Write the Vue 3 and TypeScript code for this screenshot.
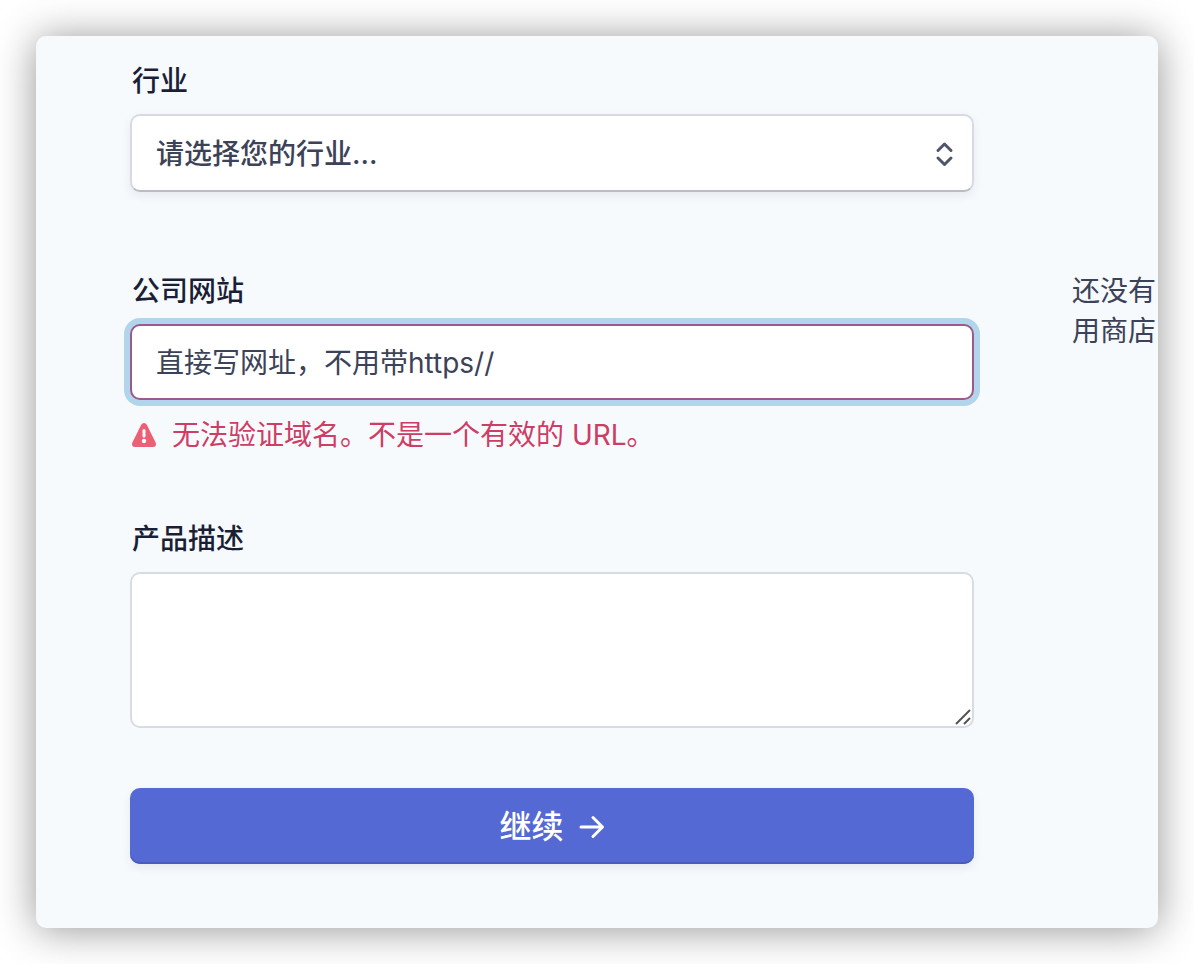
<script setup lang="ts">
import { ref } from 'vue'

const industry = ref('')
const website = ref('直接写网址，不用带https//')
const description = ref('')
const industries: string[] = ['软件', '零售', '教育', '专业服务']
</script>

<template>
  <main class="page">
    <section class="panel">
      <form class="form" @submit.prevent>
        <div class="field industry">
          <label for="industry">行业</label>
          <div class="select-wrap">
            <select id="industry" v-model="industry" class="control">
              <option value="">请选择您的行业...</option>
              <option v-for="item in industries" :key="item" :value="item">{{ item }}</option>
            </select>
            <svg class="chevrons" viewBox="0 0 20 28" aria-hidden="true">
              <path d="M4 10.500 10.500 4l6.500 6.500M4 18l6.500 6.500L17 18" />
            </svg>
          </div>
        </div>

        <div class="field website">
          <label for="website">公司网站</label>
          <input
            id="website"
            v-model="website"
            class="control invalid"
            type="text"
            aria-invalid="true"
            aria-describedby="website-error"
          />
          <p id="website-error" class="error">
            <svg viewBox="0 0 24 24" aria-hidden="true">
              <path
                class="triangle"
                d="M9.2 1.8Q10.3 0 12 0t2.8 1.8l8.8 17.7Q24.4 21.500 23.600 22.800 22.800 24 21 24H3Q1.200 24 .4 22.800-.4 21.500.4 19.500Z"
              />
              <path class="mark" d="M12 7.500v5.500" />
              <circle class="dot" cx="12" cy="18" r="2.200" />
            </svg>
            <span>无法验证域名。不是一个有效的 URL。</span>
          </p>
        </div>

        <div class="field description">
          <label for="description">产品描述</label>
          <div class="area-wrap">
            <textarea id="description" v-model="description" class="control"></textarea>
            <svg class="grip" viewBox="0 0 16 16" aria-hidden="true">
              <path d="M1 15 15 1M9 15l6-6" />
            </svg>
          </div>
        </div>

        <button class="submit" type="submit">
          <span>继续</span>
          <svg viewBox="0 0 26 24" aria-hidden="true">
            <path d="M2 12h21M14 2.500l9.500 9.500-9.500 9.500" />
          </svg>
        </button>
      </form>

      <aside class="hint">还没有<br />用商店</aside>
    </section>
  </main>
</template>

<style>
body {
  background: #fff;
}
</style>

<style scoped>
.page {
  box-sizing: border-box;
  min-height: 100vh;
  padding: 36px;
  font-family: Inter, 'Noto Sans CJK SC', sans-serif;
  font-size: 28px;
  line-height: 40px;
  color: #3c4257;
}

.panel {
  display: flex;
  gap: 98px;
  padding: 25px 0 64px 94px;
  border-radius: 10px;
  background: #f6fafd;
  box-shadow: 0 2px 40px rgba(0, 0, 0, 0.42);
}

.form {
  flex: 1;
  min-width: 0;
}

.field {
  display: flex;
  flex-direction: column;
}

.industry {
  margin-bottom: 79px;
}

.website {
  margin-bottom: 64px;
}

.description {
  margin-bottom: 60px;
}

label {
  margin: 0 0 13px 2px;
  font-weight: 500;
  color: #1a1f36;
}

.control {
  display: block;
  box-sizing: border-box;
  width: 100%;
  height: 76px;
  margin: 0;
  padding: 0 24px;
  border: 2px solid #d8dce2;
  border-radius: 10px;
  outline: none;
  background: #fff;
  color: #3c4257;
  font: inherit;
}

.select-wrap,
.area-wrap {
  position: relative;
}

select.control {
  height: 78px;
  padding-top: 2px;
  appearance: none;
  border-color: #d7dae2;
  border-bottom-color: #b9bcc2;
  box-shadow: 0 4px 10px rgba(60, 66, 87, 0.08);
  font-weight: 500;
}

.chevrons {
  position: absolute;
  top: 26px;
  right: 20px;
  width: 20px;
  height: 28px;
  fill: none;
  stroke: #4f566b;
  stroke-width: 3;
  stroke-linecap: round;
  stroke-linejoin: round;
  pointer-events: none;
}

.invalid {
  padding-bottom: 2px;
  border-color: #9b5a8b;
  box-shadow: 0 0 0 6px #b2d5ec;
}

.error {
  display: flex;
  align-items: center;
  gap: 16px;
  margin: 15px 0 0 2px;
  color: #cd3d64;
}

.error svg {
  width: 24px;
  height: 24px;
}

.triangle {
  fill: #ed5f74;
}

.mark {
  stroke: #fff;
  stroke-width: 3;
  stroke-linecap: round;
}

.dot {
  fill: #fff;
}

textarea.control {
  height: 156px;
  padding: 16px 24px;
  resize: none;
}

.grip {
  position: absolute;
  right: 3px;
  bottom: 3px;
  width: 16px;
  height: 16px;
  fill: none;
  stroke: #555;
  stroke-width: 2;
  pointer-events: none;
}

.submit {
  display: flex;
  align-items: center;
  justify-content: center;
  gap: 15px;
  width: 100%;
  height: 76px;
  padding: 2px 0 0;
  border: 0;
  border-radius: 10px;
  background: #5469d4;
  box-shadow:
    inset 0 -2px 0 #4a5dbd,
    0 4px 10px rgba(60, 66, 87, 0.08);
  color: #fff;
  font: inherit;
  font-size: 32px;
  font-weight: 500;
  cursor: pointer;
}

.submit svg {
  width: 26px;
  height: 24px;
  fill: none;
  stroke: #fff;
  stroke-width: 3;
  stroke-linecap: round;
  stroke-linejoin: round;
}

.hint {
  flex: none;
  width: 86px;
  padding-top: 210px;
  white-space: nowrap;
}
</style>
